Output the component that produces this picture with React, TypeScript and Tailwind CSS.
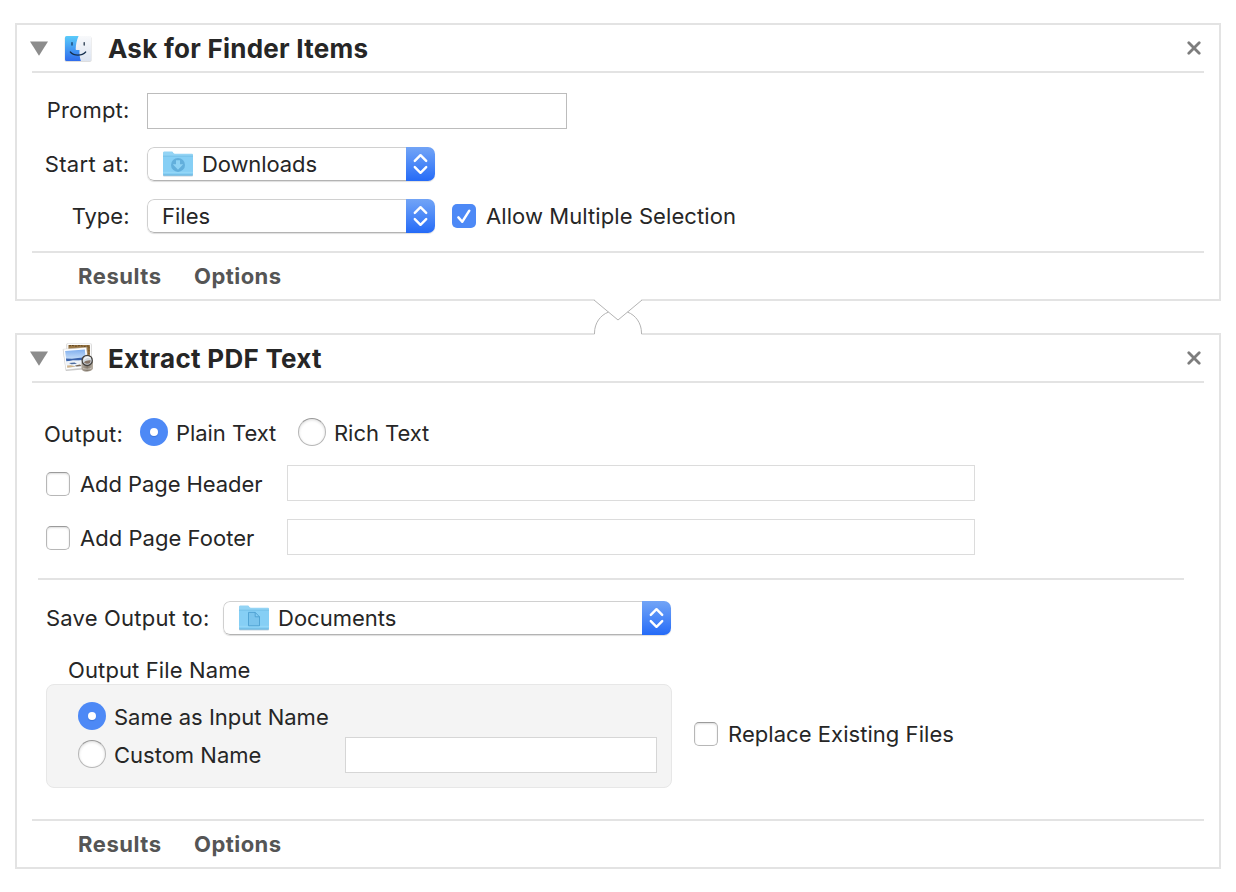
import type { ReactNode } from "react";

function Disclosure() {
  return (
    <svg className="block h-[15px] w-[18px]" viewBox="0 0 18 15">
      <path d="M0 0.5H18L9 14.8Z" fill="#8c8c8c" />
    </svg>
  );
}

function CloseIcon() {
  return (
    <svg className="block h-[14px] w-[14px]" viewBox="0 0 14 14">
      <path d="M1.8 1.8L12.2 12.2M12.2 1.8L1.8 12.2" stroke="#7d7d7d" strokeWidth="2.8" strokeLinecap="round" />
    </svg>
  );
}

function FinderIcon() {
  return (
    <svg className="block h-8 w-8 overflow-visible" viewBox="0 0 32 32">
      <defs>
        <linearGradient id="finderBlue" x1="0" y1="0" x2="0" y2="1">
          <stop offset="0" stopColor="#5acbfa" />
          <stop offset="1" stopColor="#2f6cec" />
        </linearGradient>
        <linearGradient id="finderWhite" x1="0" y1="0" x2="0" y2="1">
          <stop offset="0" stopColor="#f8f9fb" />
          <stop offset="1" stopColor="#dde4f0" />
        </linearGradient>
      </defs>
      <rect x="2.6" y="4.6" width="27" height="25.4" rx="1.8" fill="#000" opacity="0.13" />
      <rect x="3" y="4" width="26.2" height="25" rx="1.6" fill="url(#finderWhite)" />
      <path d="M4.6 4H16.6C14.8 8 13.8 12.5 13.7 17.2C13.7 17.7 14 18 14.4 18H17.5C17.2 21.5 17.7 25.5 18.9 29H4.6A1.6 1.6 0 0 1 3 27.4V5.6A1.6 1.6 0 0 1 4.6 4Z" fill="url(#finderBlue)" />
      <path d="M10 10.7V13" stroke="#153d68" strokeWidth="1.3" strokeLinecap="round" />
      <path d="M22.2 10.7V13" stroke="#26384c" strokeWidth="1.3" strokeLinecap="round" />
      <path d="M8.3 20C12 24.1 19.8 24.1 23.7 20" stroke="#17304e" strokeWidth="1.2" fill="none" strokeLinecap="round" />
    </svg>
  );
}

function PreviewIcon() {
  return (
    <svg className="block h-8 w-8 overflow-visible" viewBox="0 0 32 32">
      <defs>
        <linearGradient id="photoSky" x1="0" y1="0" x2="0" y2="1">
          <stop offset="0" stopColor="#7faeee" />
          <stop offset="0.5" stopColor="#c3dcf8" />
          <stop offset="1" stopColor="#dfe9f2" />
        </linearGradient>
        <linearGradient id="loupeBody" x1="0" y1="0" x2="1" y2="0">
          <stop offset="0" stopColor="#b5ada2" />
          <stop offset="0.5" stopColor="#81776a" />
          <stop offset="1" stopColor="#b9b1a6" />
        </linearGradient>
      </defs>
      <path d="M4.3 2.2L29.8 2.4V24L5.3 23Z" fill="#000" opacity="0.18" />
      <path d="M5 1.5L29.3 1.8V23H5Z" fill="#fff" stroke="#cfcfcf" strokeWidth="0.5" />
      <path d="M6.4 2.9L27.9 3.1V20H6.4Z" fill="#9b7845" />
      <path d="M7 3.9L10 3.4L14 4.2L18 3.5L22 4.4L27 3.9V12" stroke="#59401e" strokeWidth="0.9" fill="none" strokeDasharray="2 1" />
      <path d="M0.8 7.6L24.6 5.6L27 27L3.8 29Z" fill="#000" opacity="0.22" />
      <path d="M1.2 7.2L24.4 5.4L26.7 25.3L3.9 27.8Z" fill="#fff" stroke="#d0d0d0" strokeWidth="0.4" />
      <path d="M3.1 8.9L22.8 7.4L24.6 23.7L5.2 26Z" fill="url(#photoSky)" />
      <path d="M3.9 16.6L10 16.7L16 16L23.6 15.2L24 17.8L17 18.4L12 19L4.4 19.2Z" fill="#3b63ab" />
      <path d="M4.4 19.4L11 18.3L17 18.6L24 17.6L24.4 22.8L16 24.2L11 23.6L5.1 25Z" fill="#eef3f9" />
      <path d="M7 20.9L12.5 20.5L15 21.8L9.5 22.2Z" fill="#4c6b9f" />
      <path d="M5 23.6L9 23.2L14 24.6L5.3 25.7Z" fill="#d0b48b" />
      <path d="M13 23.4L18 22.4L19.5 24L14.5 24.6Z" fill="#7b6958" />
      <path d="M19.4 20.5V27C20 30.5 30.3 30.5 31 26.5V19Z" fill="url(#loupeBody)" />
      <circle cx="25.2" cy="18.4" r="5.1" fill="#d3dbe2" stroke="#45423e" strokeWidth="1.3" />
      <path d="M22 20.2C24 18.6 27.2 17.8 28.8 18.6L28.2 20.7C27 22.2 23.5 22.2 22 20.2Z" fill="#857467" />
      <path d="M22 17.5C23.5 15 26.8 14.6 28.6 16.3" stroke="#f5f7f8" strokeWidth="1.2" fill="none" />
      <path d="M21 26.2C23 27.6 27.8 27.4 29.6 26" stroke="#d2ccc4" strokeWidth="0.8" fill="none" />
    </svg>
  );
}

function FolderIcon({ kind }: { kind: "downloads" | "documents" }) {
  return (
    <svg className="block h-[26px] w-[32px]" viewBox="0 0 32 26">
      <path d="M1 2.6C1 1.6 1.6 1 2.5 1H9.8C11.2 1 11.2 3.1 12.8 3.1H29.6C30.5 3.1 31 3.7 31 4.5V24.5C31 25.1 30.6 25.4 30 25.4H2C1.4 25.4 1 25.1 1 24.5Z" fill="#a9bcc9" opacity="0.65" />
      <path d="M1 2C1 1 1.6 .4 2.5 .4H9.8C11.2 .4 11.2 2.7 12.8 2.7H29.6C30.5 2.7 31 3.2 31 4V8H1Z" fill="#93d4f5" />
      <path d="M1 5.2H31V23.6C31 24.1 30.6 24.4 30 24.4H2C1.4 24.4 1 24.1 1 23.6Z" fill="#86cff5" />
      <path d="M1 5.2H31" stroke="#6ebbe5" strokeWidth="0.8" />
      <path d="M1 21.3H31" stroke="#a0dcf8" strokeWidth="0.7" />
      <path d="M1.3 24H30.7" stroke="#65aed7" strokeWidth="0.9" />
      {kind === "downloads" ? (
        <>
          <circle cx="16" cy="13.9" r="7" fill="#62afdc" />
          <path d="M14 9.2H18V13.3H21.2L16 18.7L10.8 13.3H14Z" fill="#8fd3f5" />
        </>
      ) : (
        <path d="M10.5 7.4H17.2L21.5 11.8V20.8H10.5ZM17.2 7.4V11.8H21.5" fill="#7ac4ed" stroke="#4c9fd0" strokeWidth="0.9" />
      )}
    </svg>
  );
}

function Select({ className, children }: { className: string; children: ReactNode }) {
  return (
    <div className={`flex h-[34px] shrink-0 overflow-hidden rounded-[7px] shadow-[0_1px_1px_#00000022] ${className}`}>
      <div className="flex flex-1 items-center rounded-l-[7px] border border-r-0 border-[#d0d0d0] border-b-[#b3b3b3] bg-white pl-3.5">
        {children}
      </div>
      <div className="flex w-[29px] items-center justify-center bg-linear-to-b from-[#72a4f6] to-[#246af7]">
        <svg className="block h-[22px] w-[15px]" viewBox="0 0 15 22">
          <path d="M1.8 7.9L7.5 2.2L13.2 7.9M1.8 14.1L7.5 19.8L13.2 14.1" fill="none" stroke="#fff" strokeWidth="2.4" strokeLinecap="round" strokeLinejoin="round" />
        </svg>
      </div>
    </div>
  );
}

function Field({ className }: { className: string }) {
  return <div className={`h-9 shrink-0 border bg-white ${className}`} />;
}

function Checkbox({ checked = false }: { checked?: boolean }) {
  return checked ? (
    <div className="size-6 shrink-0 rounded-[5px] bg-[#4d89f6]">
      <svg className="block size-6" viewBox="0 0 24 24">
        <path d="M6.4 13.4L10.2 17.8L17.3 6.7" fill="none" stroke="#fff" strokeWidth="2.5" strokeLinecap="round" strokeLinejoin="round" />
      </svg>
    </div>
  ) : (
    <div className="size-6 shrink-0 rounded-[5px] border border-[#b7b7b7] border-t-[#9b9b9b] bg-white shadow-[inset_0_1px_2px_#00000024]" />
  );
}

function Radio({ checked = false }: { checked?: boolean }) {
  return checked ? (
    <div className="flex size-7 shrink-0 items-center justify-center rounded-full bg-[#4d89f6]">
      <div className="size-2 rounded-full bg-white shadow-[0_1px_1px_#1e53b066]" />
    </div>
  ) : (
    <div className="size-7 shrink-0 rounded-full border border-[#b7b7b7] border-t-[#999999] bg-white shadow-[inset_0_1px_3px_#00000024]" />
  );
}

function Header({ icon, children }: { icon: ReactNode; children: ReactNode }) {
  return (
    <div className="mx-[15px] flex h-12 items-center border-b-2 border-[#e3e3e3]">
      <div className="-ml-0.5"><Disclosure /></div>
      <div className="ml-[14px]">{icon}</div>
      <h2 className="ml-3.5 flex-1 pt-0.5 text-[26px] font-bold leading-8">{children}</h2>
      <div className="mr-[3px]"><CloseIcon /></div>
    </div>
  );
}

function Footer() {
  return (
    <div className="mx-[15px] flex h-12 items-center border-t-2 border-[#e3e3e3] pl-[46px] text-[22px] font-bold text-[#555]">
      <span className="w-[116px] tracking-[0.55px]">Results</span>
      <span className="tracking-[0.45px]">Options</span>
    </div>
  );
}

export default function App() {
  return (
    <main className="relative h-[892px] w-[1236px] overflow-hidden whitespace-nowrap bg-white pl-[15px] pt-[23px] font-['Inter',sans-serif] text-[22px] leading-7 text-[#262626]">
      <section className="flex h-[278px] w-[1206px] flex-col border-2 border-[#e3e3e3]">
        <Header icon={<FinderIcon />}><span className="tracking-[0.25px]">Ask for Finder Items</span></Header>
        <div className="flex flex-1 flex-col pt-5">
          <div className="flex h-9 items-center">
            <span className="mr-[17.5px] w-[112.5px] pb-0.5 text-right tracking-[0.2px]">Prompt:</span>
            <Field className="w-[420px] border-[#bcbcbc]" />
          </div>
          <div className="mt-[18px] flex h-[34px] items-center">
            <span className="mr-[17.5px] w-[112.5px] text-right tracking-[0.35px]">Start at:</span>
            <Select className="w-[288px]">
              <FolderIcon kind="downloads" />
              <span className="ml-2 tracking-[-0.1px]">Downloads</span>
            </Select>
          </div>
          <div className="mt-[18px] flex h-[34px] items-center">
            <span className="mr-[17.5px] w-[112.5px] text-right">Type:</span>
            <Select className="w-[288px]">Files</Select>
            <div className="ml-[17px]"><Checkbox checked /></div>
            <span className="ml-2.5 tracking-[0.08px]">Allow Multiple Selection</span>
          </div>
        </div>
        <Footer />
      </section>

      <svg className="absolute left-[593px] top-[299px] h-[36px] w-[50px]" viewBox="0 0 50 36">
        <path d="M1.5 0H48.5V36H1.5Z" fill="#fff" />
        <path d="M1 1L25 21L49 1" fill="none" stroke="#b4b4b4" strokeWidth="1" />
        <path d="M1.5 35V34C1.5 24 7.5 16 15.5 13.1M48.5 35V34C48.5 24 42.5 16 34.5 13.1" fill="none" stroke="#b4b4b4" strokeWidth="1" />
      </svg>

      <section className="mt-8 flex h-[536px] w-[1206px] flex-col border-2 border-[#e3e3e3]">
        <Header icon={<PreviewIcon />}><span className="tracking-[0.28px]">Extract PDF Text</span></Header>
        <div className="flex flex-1 flex-col pt-[35px]">
          <div className="flex h-7 items-center pl-[27px]">
            <span className="w-24 pt-1 tracking-[0.3px]">Output:</span>
            <Radio checked />
            <span className="ml-2 w-[122px] pt-0.5 tracking-[-0.05px]">Plain Text</span>
            <Radio />
            <span className="ml-2 pt-0.5 tracking-[-0.05px]">Rich Text</span>
          </div>
          <div className="mt-[19px] flex h-9 items-center pl-[29px]">
            <div className="pt-0.5"><Checkbox /></div>
            <span className="ml-2.5 w-[207px] pt-0.5 tracking-[-0.07px]">Add Page Header</span>
            <Field className="w-[688px] border-[#dcdcdc]" />
          </div>
          <div className="mt-[18px] flex h-9 items-center pl-[29px]">
            <div className="pt-0.5"><Checkbox /></div>
            <span className="ml-2.5 w-[207px] pt-0.5 tracking-[0.04px]">Add Page Footer</span>
            <Field className="w-[688px] border-[#dcdcdc]" />
          </div>
          <div className="ml-[21px] mt-[23px] h-0.5 w-[1146px] bg-[#e3e3e3]" />
          <div className="mt-[21px] flex h-[34px] items-center pl-[29px]">
            <span className="w-[177px] tracking-[0.2px]">Save Output to:</span>
            <Select className="w-[448px]">
              <FolderIcon kind="documents" />
              <span className="ml-2">Documents</span>
            </Select>
          </div>
          <div className="ml-[51px] mt-[21px] h-7 tracking-[0.12px]">Output File Name</div>
          <div className="flex items-center pl-[29px]">
            <div className="flex h-[104px] w-[626px] flex-col rounded-[8px] border border-[#e7e7e7] bg-[#f4f4f4] pl-[31px] pt-[17px]">
              <div className="flex h-7 items-center">
                <Radio checked />
                <span className="ml-2 pt-0.5">Same as Input Name</span>
              </div>
              <div className="mt-[7px] flex h-9 items-center">
                <div className="-mt-0.5"><Radio /></div>
                <span className="ml-2 w-[231px]">Custom Name</span>
                <Field className="w-[312px] border-[#d6d6d6]" />
              </div>
            </div>
            <div className="ml-[22px] -mt-1"><Checkbox /></div>
            <span className="-mt-1 ml-2.5 tracking-[0.05px]">Replace Existing Files</span>
          </div>
        </div>
        <Footer />
      </section>
    </main>
  );
}
